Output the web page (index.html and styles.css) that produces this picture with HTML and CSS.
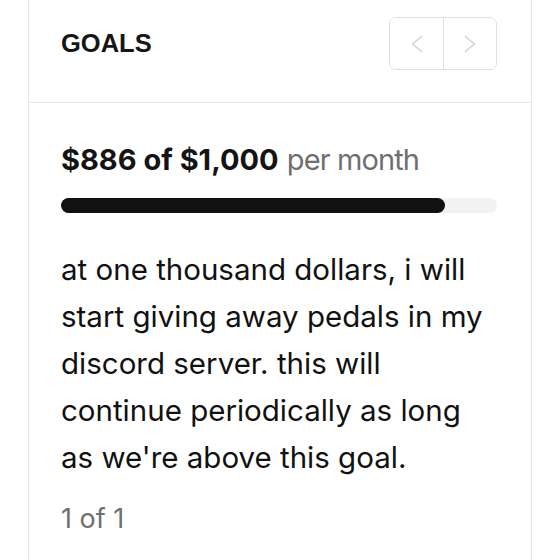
FILE: index.html
```html
<!DOCTYPE html>
<html lang="en">
  <head>
    <meta charset="UTF-8" />
    <meta name="viewport" content="width=device-width, initial-scale=1.0" />
    <title>Goals</title>
    <link rel="stylesheet" href="styles.css">
  </head>

  <body>
    <div class="card">
      <!-- header -->
      <div class="card-header">
        <h2 class="title">GOALS</h2>
        <div class="pager">
          <button class="pager-btn" aria-label="Previous">
            <svg width="12" height="18" viewBox="0 0 12 18">
              <path d="M10.5 1.5 L1.5 9 L10.5 16.5" fill="none" stroke="#d2d2d2" stroke-width="1.6" stroke-linecap="round" stroke-linejoin="round" />
            </svg>
          </button>
          <button class="pager-btn" aria-label="Next">
            <svg width="12" height="18" viewBox="0 0 12 18">
              <path d="M1.5 1.5 L10.5 9 L1.5 16.5" fill="none" stroke="#d2d2d2" stroke-width="1.6" stroke-linecap="round" stroke-linejoin="round" />
            </svg>
          </button>
        </div>
      </div>

      <!-- goal -->
      <div class="goal">
        <p class="goal-amount">
          <strong>$886 of $1,000</strong> <span class="per">per month</span>
        </p>
        <div class="progress">
          <div class="progress-fill" style="width: 88%"></div>
        </div>
        <p class="goal-text">
          at one thousand dollars, i will start giving away pedals in my
          discord server. this will continue periodically as long as we're
          above this goal.
        </p>
        <p class="goal-count">1 of 1</p>
      </div>
    </div>
  </body>
</html>
```

FILE: styles.css
```css
body {
  margin: 0;
  background: #ffffff;
  font-family: Inter, "Liberation Sans", sans-serif;
  color: #111111;
}

.card {
  margin-left: 28px;
  width: 502px;
  border-left: 1.5px solid #e6e6e6;
  border-right: 1.5px solid #e6e6e6;
  min-height: 560px;
}

/* header */
.card-header {
  display: flex;
  align-items: center;
  justify-content: space-between;
  padding: 17px 34px 32px 32px;
  border-bottom: 1.5px solid #e6e6e6;
}

.title {
  margin: 0;
  font-family: "Liberation Sans", Arial, sans-serif;
  font-size: 25.5px;
  font-weight: bold;
  color: #161616;
}

.pager {
  display: flex;
  border: 1.5px solid #dedede;
  border-radius: 7px;
  overflow: hidden;
}

.pager-btn {
  width: 53px;
  height: 51px;
  padding: 0;
  border: none;
  background: #ffffff;
  display: flex;
  align-items: center;
  justify-content: center;
}

.pager-btn + .pager-btn {
  border-left: 1.5px solid #dedede;
}

/* goal */
.goal {
  padding: 39px 34px 0 32px;
}

.goal-amount {
  margin: 0;
  font-size: 29px;
  line-height: 36px;
}

.goal-amount strong {
  font-weight: 700;
  color: #141414;
}

.per {
  color: #6f6f6f;
  letter-spacing: -0.9px;
}

.progress {
  margin-top: 20px;
  height: 15px;
  border-radius: 8px;
  background: #f2f2f2;
}

.progress-fill {
  height: 100%;
  border-radius: 8px;
  background: #111111;
}

.goal-text {
  margin: 33px 0 0 0;
  padding-right: 7px;
  font-size: 29.5px;
  line-height: 47px;
  color: #111111;
}

.goal-count {
  margin: 21px 0 0 0;
  font-size: 27px;
  line-height: 33px;
  color: #6f6f6f;
}
```
